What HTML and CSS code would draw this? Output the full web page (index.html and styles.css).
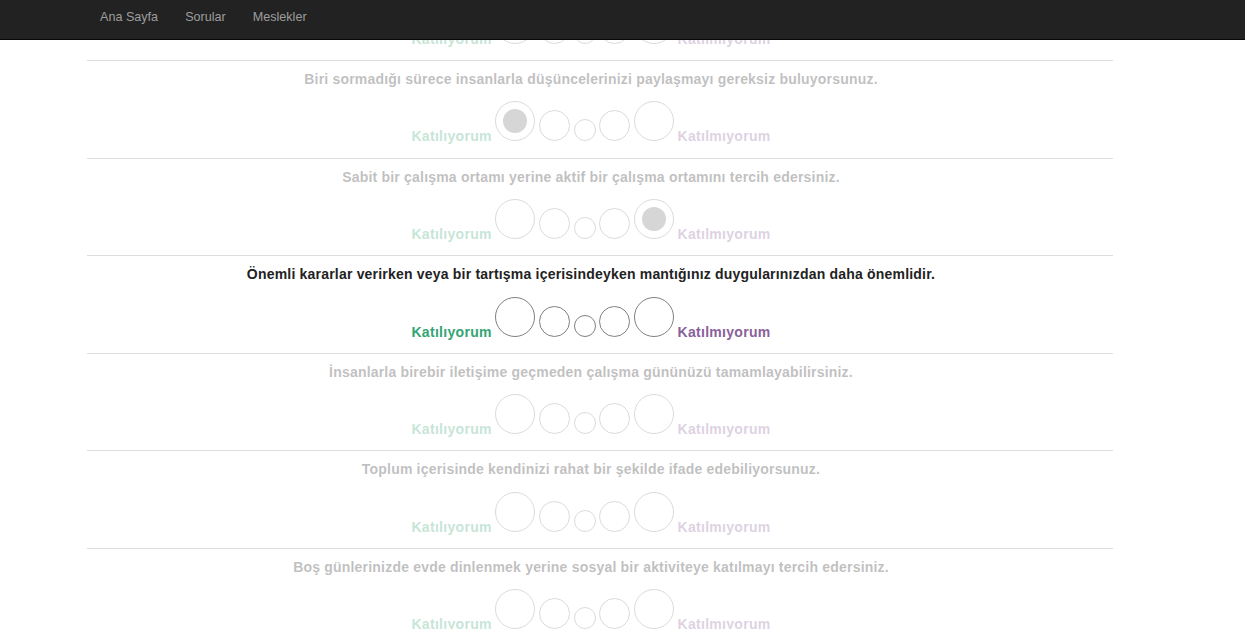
FILE: index.html
```html
<!DOCTYPE html>
<html lang="tr">
<head>
<meta charset="utf-8">
<title>Sorular</title>
<link rel="stylesheet" href="styles.css">
</head>
<body>
<nav class="navbar">
  <ul class="nav">
    <li><a href="#">Ana Sayfa</a></li>
    <li><a href="#">Sorular</a></li>
    <li><a href="#">Meslekler</a></li>
  </ul>
</nav>
<main class="questions">
  <section class="question faded">
    <p class="q-text">Düzenli olarak yeni arkadaşlar edinirsiniz.</p>
    <div class="scale"><span class="agree">Katılıyorum</span> <span class="opt s1"></span> <span class="opt s2"></span> <span class="opt s3"></span> <span class="opt s2"></span> <span class="opt s1"></span> <span class="disagree">Katılmıyorum</span></div>
  </section>
  <section class="question faded">
    <p class="q-text">Biri sormadığı sürece insanlarla düşüncelerinizi paylaşmayı gereksiz buluyorsunuz.</p>
    <div class="scale"><span class="agree">Katılıyorum</span> <span class="opt s1 checked"></span> <span class="opt s2"></span> <span class="opt s3"></span> <span class="opt s2"></span> <span class="opt s1"></span> <span class="disagree">Katılmıyorum</span></div>
  </section>
  <section class="question faded">
    <p class="q-text">Sabit bir çalışma ortamı yerine aktif bir çalışma ortamını tercih edersiniz.</p>
    <div class="scale"><span class="agree">Katılıyorum</span> <span class="opt s1"></span> <span class="opt s2"></span> <span class="opt s3"></span> <span class="opt s2"></span> <span class="opt s1 checked"></span> <span class="disagree">Katılmıyorum</span></div>
  </section>
  <section class="question">
    <p class="q-text">Önemli kararlar verirken veya bir tartışma içerisindeyken mantığınız duygularınızdan daha önemlidir.</p>
    <div class="scale"><span class="agree">Katılıyorum</span> <span class="opt s1"></span> <span class="opt s2"></span> <span class="opt s3"></span> <span class="opt s2"></span> <span class="opt s1"></span> <span class="disagree">Katılmıyorum</span></div>
  </section>
  <section class="question faded">
    <p class="q-text">İnsanlarla birebir iletişime geçmeden çalışma gününüzü tamamlayabilirsiniz.</p>
    <div class="scale"><span class="agree">Katılıyorum</span> <span class="opt s1"></span> <span class="opt s2"></span> <span class="opt s3"></span> <span class="opt s2"></span> <span class="opt s1"></span> <span class="disagree">Katılmıyorum</span></div>
  </section>
  <section class="question faded">
    <p class="q-text">Toplum içerisinde kendinizi rahat bir şekilde ifade edebiliyorsunuz.</p>
    <div class="scale"><span class="agree">Katılıyorum</span> <span class="opt s1"></span> <span class="opt s2"></span> <span class="opt s3"></span> <span class="opt s2"></span> <span class="opt s1"></span> <span class="disagree">Katılmıyorum</span></div>
  </section>
  <section class="question faded">
    <p class="q-text">Boş günlerinizde evde dinlenmek yerine sosyal bir aktiviteye katılmayı tercih edersiniz.</p>
    <div class="scale"><span class="agree">Katılıyorum</span> <span class="opt s1"></span> <span class="opt s2"></span> <span class="opt s3"></span> <span class="opt s2"></span> <span class="opt s1"></span> <span class="disagree">Katılmıyorum</span></div>
  </section>
</main>
</body>
</html>
```
FILE: styles.css
```css
html, body {
  margin: 0;
  padding: 0;
  background: #fff;
  font-family: "Liberation Sans", Arial, sans-serif;
  font-size: 13px;
  line-height: 18px;
  color: #222;
  overflow: hidden;
}

.navbar {
  position: fixed;
  top: 0;
  left: 0;
  right: 0;
  height: 39px;
  background: #222;
  border-bottom: 1px solid #080808;
  z-index: 10;
}

.nav {
  list-style: none;
  margin: 0;
  padding: 0 0 0 86.5px;
  display: flex;
}

.nav a {
  display: block;
  padding: 7px 13.5px;
  font-size: 12.6px;
  line-height: 20px;
  color: #9d9d9d;
  text-decoration: none;
}

.questions {
  margin: -37.6px 0 0 87px;
  width: 1026px;
}

.question {
  box-sizing: border-box;
  height: 97.6px;
  border-top: 1px solid #ddd;
  padding: 9px 18px 0 0;
  text-align: center;
}

.question.faded .q-text,
.question.faded .scale {
  opacity: 0.28;
}

.q-text {
  margin: 0 0 13.4px;
  font-size: 14px;
  font-weight: bold;
  letter-spacing: 0.2px;
}

.scale {
  white-space: nowrap;
}

.agree,
.disagree {
  font-weight: bold;
  font-size: 14px;
  letter-spacing: 0.3px;
}

.agree { color: #33a474; }
.disagree { color: #88619a; }

.opt {
  display: inline-block;
  position: relative;
  box-sizing: border-box;
  border: 1px solid #808080;
  border-radius: 50%;
  margin: 0;
}

.s1 { width: 40px; height: 40px; }
.s2 { width: 31px; height: 31px; }
.s3 { width: 22px; height: 22px; }

.opt.checked::after {
  content: "";
  position: absolute;
  left: 7px;
  top: 7px;
  width: 24px;
  height: 24px;
  border-radius: 50%;
  background: #6e6e6e;
}
```
